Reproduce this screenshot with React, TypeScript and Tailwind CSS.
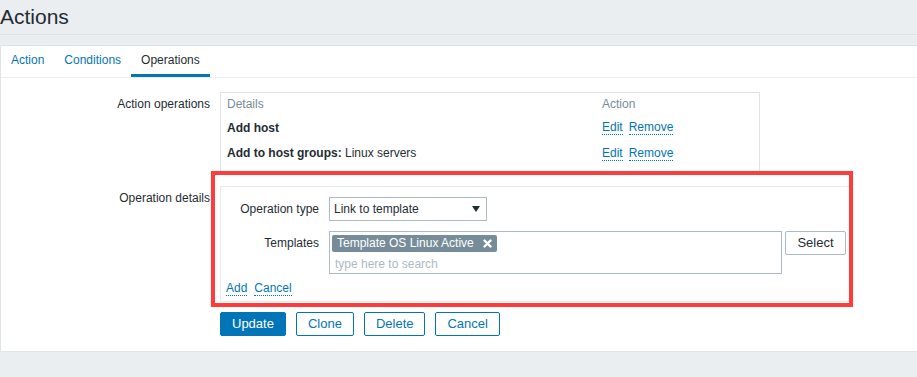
import React from "react";

const linkCls =
  "inline-block leading-[14px] border-b border-dotted border-[#0275b8] text-[#0275b8] cursor-pointer";

const tabs = [
  { label: "Action", active: false },
  { label: "Conditions", active: false },
  { label: "Operations", active: true },
];

const ops = [
  { bold: "Add host", rest: "", h: "h-[25px]" },
  { bold: "Add to host groups:", rest: " Linux servers", h: "h-[26px]" },
];

function CloseX() {
  return (
    <svg width="9" height="9" viewBox="0 0 9 9" className="ml-[9px]">
      <path d="M1.5 1.5 L7.5 7.5 M7.5 1.5 L1.5 7.5" stroke="#fff" strokeWidth="2.4" strokeLinecap="round" />
    </svg>
  );
}

function Btn({ children, primary }: { children: React.ReactNode; primary?: boolean }) {
  return (
    <button
      className={
        primary
          ? "h-[24px] px-[11px] rounded-[2px] border border-[#0275b8] bg-[#0275b8] text-[13px] text-white"
          : "h-[24px] px-[11px] rounded-[2px] border border-[#0275b8] bg-white text-[13px] text-[#0275b8]"
      }
    >
      {children}
    </button>
  );
}

export default function App() {
  return (
    <div className="relative min-h-[377px] bg-[#ebeef0] font-['Liberation_Sans',Arial,sans-serif] text-[12px] text-[#1f2c33]">
      {/* Page header */}
      <header className="h-[35px] border-b border-[#dde2e5]">
        <h1 className="text-[21px] leading-[34px]">Actions</h1>
      </header>

      <div className="mt-[10px] bg-white border-t border-l border-b border-[#dfe4e7]">
        {/* Tabs */}
        <div className="flex border-b border-[#ebeef0]">
          {tabs.map((t) => (
            <div
              key={t.label}
              className={
                t.active
                  ? "h-[31px] px-[10px] leading-[28px] border-b-[3px] border-[#0275b8] text-[#1f2c33]"
                  : "h-[31px] px-[10px] leading-[28px] border-b-[3px] border-transparent text-[#0275b8]"
              }
            >
              {t.label}
            </div>
          ))}
        </div>

        <div className="pt-[14px] pb-[15px]">
          {/* Action operations */}
          <div className="grid grid-cols-[209px_1fr] gap-x-[10px]">
            <div className="text-right leading-[24px]">Action operations</div>
            <div className="w-[540px] border border-[#dfe4e7] pl-[6px] pb-[5px]">
              <div className="grid grid-cols-[375px_1fr] h-[22px] items-center text-[#768d99]">
                <span>Details</span>
                <span>Action</span>
              </div>
              {ops.map((o) => (
                <div key={o.bold} className={`grid grid-cols-[375px_1fr] items-center ${o.h}`}>
                  <span>
                    <b>{o.bold}</b>
                    {o.rest}
                  </span>
                  <span className="flex gap-[6px]">
                    <a className={linkCls}>Edit</a>
                    <a className={linkCls}>Remove</a>
                  </span>
                </div>
              ))}
            </div>
          </div>

          {/* Operation details */}
          <div className="mt-[14px] grid grid-cols-[209px_1fr] gap-x-[10px]">
            <div className="text-right leading-[24px]">Operation details</div>
            <div className="w-[631px] border border-[#e6eaec] pt-[10px] px-[5px] pb-[5px]">
              <div className="grid grid-cols-[93px_1fr] gap-x-[10px]">
                <div className="text-right leading-[24px]">Operation type</div>
                <div className="flex h-[24px] w-[158px] items-center justify-between border border-[#acbbc2] pl-[4px] pr-[6px]">
                  <span>Link to template</span>
                  <svg width="8" height="6" viewBox="0 0 8 6">
                    <path d="M0 0 H8 L4 6 Z" fill="#1f2c33" />
                  </svg>
                </div>
              </div>

              <div className="mt-[10px] grid grid-cols-[93px_1fr] gap-x-[10px]">
                <div className="text-right leading-[24px]">Templates</div>
                <div className="flex items-start gap-[3px]">
                  <div className="h-[43px] w-[453px] border border-[#acbbc2] p-[2px]">
                    <span className="inline-flex h-[17px] items-center rounded-[2px] bg-[#768d99] px-[5px] text-white">
                      Template OS Linux Active
                      <CloseX />
                    </span>
                    <div className="mt-[5px] pl-[3px] leading-[14px] text-[#acbbc2]">type here to search</div>
                  </div>
                  <button className="h-[24px] w-[61px] rounded-[2px] border border-[#acbbc2] bg-white text-[13px] text-[#1f2c33]">
                    Select
                  </button>
                </div>
              </div>

              <div className="mt-[7px] flex gap-[7px]">
                <a className={linkCls}>Add</a>
                <a className={linkCls}>Cancel</a>
              </div>
            </div>
          </div>

          {/* Buttons */}
          <div className="mt-[10px] grid grid-cols-[209px_1fr] gap-x-[10px]">
            <div />
            <div className="flex gap-[10px]">
              <Btn primary>Update</Btn>
              <Btn>Clone</Btn>
              <Btn>Delete</Btn>
              <Btn>Cancel</Btn>
            </div>
          </div>
        </div>
      </div>

      {/* Red highlight annotation */}
      <div className="pointer-events-none absolute left-[211px] top-[171px] h-[136px] w-[642px] border-4 border-[#ff3b3b]" />
    </div>
  );
}
